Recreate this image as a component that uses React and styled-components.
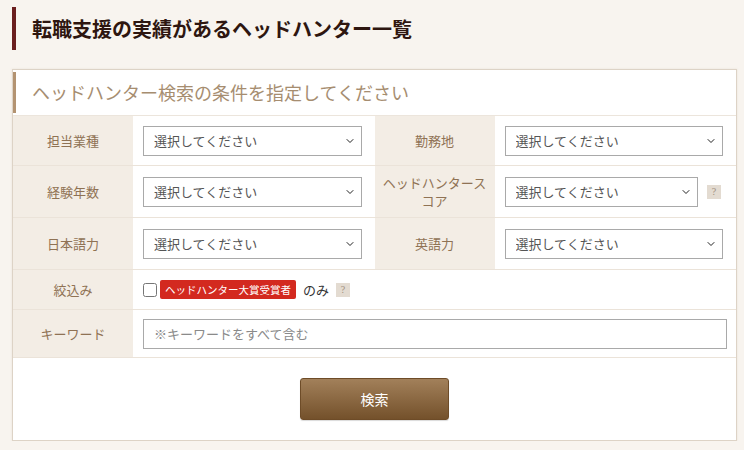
import React from 'react';
import styled, { createGlobalStyle } from 'styled-components';
import { ChevronDown } from 'lucide-react';

const GlobalStyle = createGlobalStyle`
    body {
        margin: 0;
        background: #f8f4ef;
        font-family: "Noto Sans CJK JP", "Noto Sans", sans-serif;
    }
`;

const Page = styled.div`
    padding: 7px 7px 0 12px;
`;

const Heading = styled.h1`
    margin: 0;
    height: 43px;
    line-height: 43px;
    border-left: 4px solid #6b1f1f;
    padding-left: 16px;
    font-size: 20px;
    font-weight: bold;
    color: #2e1610;
`;

const Panel = styled.section`
    margin-top: 19px;
    background: #fff;
    border: 1px solid #ddd3c6;
    box-shadow: 0 0 2px rgba(180, 160, 130, 0.2);
`;

const PanelHead = styled.div`
    padding: 2px 0;
    border-bottom: 1px solid #ece5dc;
`;

const PanelTitle = styled.h2`
    margin: 0;
    height: 41px;
    line-height: 41px;
    border-left: 3px solid #b39371;
    padding-left: 16px;
    font-size: 18px;
    font-weight: normal;
    color: #a68d70;
`;

const Grid = styled.div`
    display: grid;
    grid-template-columns: 120px 1fr 120px 1fr;
    grid-template-rows: 50px 52px 52px 40px 48px;
`;

const Label = styled.div`
    display: flex;
    align-items: center;
    justify-content: center;
    text-align: center;
    background: #f3ede5;
    border-bottom: 1px solid #ebe3d9;
    font-size: 13px;
    line-height: 18px;
    color: #8f7254;
    padding: 0 8px;
`;

const Value = styled.div`
    display: flex;
    align-items: center;
    gap: ${({ gap }) => gap || 9}px;
    padding: 0 ${({ right }) => right || 13}px 0 10px;
    border-bottom: 1px solid #ebe3d9;
    grid-column: ${({ span }) => (span ? `span ${span}` : 'auto')};
`;

const SelectWrap = styled.div`
    position: relative;
    flex: 1;
    height: 30px;
`;

const Select = styled.select`
    appearance: none;
    width: 100%;
    height: 100%;
    border: 1px solid #a9a9a9;
    border-radius: 0;
    background: #fff;
    padding: 0 28px 0 10px;
    font-family: inherit;
    font-size: 13px;
    color: #555;
`;

const Chevron = styled(ChevronDown)`
    position: absolute;
    right: 6px;
    top: 9px;
    pointer-events: none;
    color: #222;
`;

const Help = styled.span`
    display: inline-flex;
    align-items: center;
    justify-content: center;
    width: 14px;
    height: 14px;
    background: #e3dbd1;
    color: #a0907f;
    font-size: 10px;
    font-family: "Liberation Serif", serif;
`;

const Check = styled.input`
    width: 14px;
    height: 14px;
    margin: 0;
`;

const Award = styled.span`
    display: inline-block;
    background: #d3291f;
    color: #fff;
    font-size: 10.5px;
    line-height: 19px;
    padding: 0 5px;
    border-radius: 2px;
    margin-left: -4px;
`;

const Only = styled.span`
    font-size: 13px;
    color: #333;
`;

const Input = styled.input`
    flex: 1;
    height: 28px;
    border: 1px solid #a9a9a9;
    padding: 0 10px;
    font-family: inherit;
    font-size: 13px;
    color: #333;
    &::placeholder {
        color: #8a8a8a;
    }
`;

const Actions = styled.div`
    display: flex;
    justify-content: center;
    padding: 20px 0;
`;

const Button = styled.button`
    width: 149px;
    height: 42px;
    border: 1px solid #6e4c28;
    border-radius: 3px;
    background: linear-gradient(#a2805a, #74512b);
    color: #fff;
    font-family: inherit;
    font-size: 14px;
    box-shadow: 0 1px 1px rgba(0, 0, 0, 0.15);
`;

const Dropdown = () => (
    <SelectWrap>
        <Select defaultValue="">
            <option value="">選択してください</option>
        </Select>
        <Chevron size={12} strokeWidth={2} />
    </SelectWrap>
);

export default function App() {
    return (
        <Page>
            <GlobalStyle />
            <Heading>転職支援の実績があるヘッドハンター一覧</Heading>
            <Panel>
                <PanelHead>
                    <PanelTitle>ヘッドハンター検索の条件を指定してください</PanelTitle>
                </PanelHead>
                <Grid>
                    <Label>担当業種</Label>
                    <Value><Dropdown /></Value>
                    <Label>勤務地</Label>
                    <Value><Dropdown /></Value>

                    <Label>経験年数</Label>
                    <Value><Dropdown /></Value>
                    <Label>ヘッドハンタースコア</Label>
                    <Value right={15}><Dropdown /><Help>?</Help></Value>

                    <Label>日本語力</Label>
                    <Value><Dropdown /></Value>
                    <Label>英語力</Label>
                    <Value><Dropdown /></Value>

                    <Label>絞込み</Label>
                    <Value span={3} gap={7}>
                        <Check type="checkbox" />
                        <Award>ヘッドハンター大賞受賞者</Award>
                        <Only>のみ</Only>
                        <Help>?</Help>
                    </Value>

                    <Label>キーワード</Label>
                    <Value span={3} right={9}>
                        <Input placeholder="※キーワードをすべて含む" />
                    </Value>
                </Grid>
                <Actions>
                    <Button>検索</Button>
                </Actions>
            </Panel>
        </Page>
    );
}
